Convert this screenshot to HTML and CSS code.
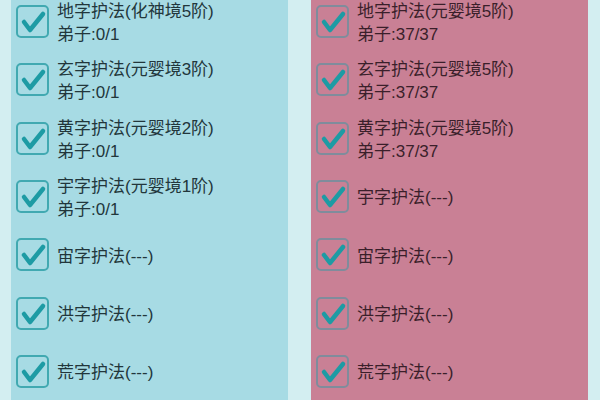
FILE: index.html
```html
<html lang="zh-CN">
<head>
    <meta charset="utf-8">
    <title>护法</title>
    <link rel="stylesheet" href="styles.css">
</head>
<body>
<div class="columns">
    <div class="panel panel-blue">
        <div class="row">
            <span class="box"><svg viewBox="0 0 33 33"><path d="M8 17 L14 25 L27 9"/></svg></span>
            <div class="label"><div>地字护法(化神境5阶)</div><div>弟子:0/1</div></div>
        </div>
        <div class="row">
            <span class="box"><svg viewBox="0 0 33 33"><path d="M8 17 L14 25 L27 9"/></svg></span>
            <div class="label"><div>玄字护法(元婴境3阶)</div><div>弟子:0/1</div></div>
        </div>
        <div class="row">
            <span class="box"><svg viewBox="0 0 33 33"><path d="M8 17 L14 25 L27 9"/></svg></span>
            <div class="label"><div>黄字护法(元婴境2阶)</div><div>弟子:0/1</div></div>
        </div>
        <div class="row">
            <span class="box"><svg viewBox="0 0 33 33"><path d="M8 17 L14 25 L27 9"/></svg></span>
            <div class="label"><div>宇字护法(元婴境1阶)</div><div>弟子:0/1</div></div>
        </div>
        <div class="row">
            <span class="box"><svg viewBox="0 0 33 33"><path d="M8 17 L14 25 L27 9"/></svg></span>
            <div class="label"><div>宙字护法(---)</div></div>
        </div>
        <div class="row">
            <span class="box"><svg viewBox="0 0 33 33"><path d="M8 17 L14 25 L27 9"/></svg></span>
            <div class="label"><div>洪字护法(---)</div></div>
        </div>
        <div class="row">
            <span class="box"><svg viewBox="0 0 33 33"><path d="M8 17 L14 25 L27 9"/></svg></span>
            <div class="label"><div>荒字护法(---)</div></div>
        </div>
    </div>
    <div class="panel panel-pink">
        <div class="row">
            <span class="box"><svg viewBox="0 0 33 33"><path d="M8 17 L14 25 L27 9"/></svg></span>
            <div class="label"><div>地字护法(元婴境5阶)</div><div>弟子:37/37</div></div>
        </div>
        <div class="row">
            <span class="box"><svg viewBox="0 0 33 33"><path d="M8 17 L14 25 L27 9"/></svg></span>
            <div class="label"><div>玄字护法(元婴境5阶)</div><div>弟子:37/37</div></div>
        </div>
        <div class="row">
            <span class="box"><svg viewBox="0 0 33 33"><path d="M8 17 L14 25 L27 9"/></svg></span>
            <div class="label"><div>黄字护法(元婴境5阶)</div><div>弟子:37/37</div></div>
        </div>
        <div class="row">
            <span class="box"><svg viewBox="0 0 33 33"><path d="M8 17 L14 25 L27 9"/></svg></span>
            <div class="label"><div>宇字护法(---)</div></div>
        </div>
        <div class="row">
            <span class="box"><svg viewBox="0 0 33 33"><path d="M8 17 L14 25 L27 9"/></svg></span>
            <div class="label"><div>宙字护法(---)</div></div>
        </div>
        <div class="row">
            <span class="box"><svg viewBox="0 0 33 33"><path d="M8 17 L14 25 L27 9"/></svg></span>
            <div class="label"><div>洪字护法(---)</div></div>
        </div>
        <div class="row">
            <span class="box"><svg viewBox="0 0 33 33"><path d="M8 17 L14 25 L27 9"/></svg></span>
            <div class="label"><div>荒字护法(---)</div></div>
        </div>
    </div>
</div>
</body>
</html>
```
FILE: styles.css
```css
body {
    margin: 0;
    background-color: #d3eef1;
    font-family: "Liberation Sans", "Noto Sans CJK SC", sans-serif;
    font-size: 17px;
    overflow: hidden;
}

.columns {
    display: flex;
    gap: 23px;
    padding: 0 12px 0 11px;
    align-items: flex-start;
}

.panel {
    flex: 1;
    margin-top: -7.7px;
    padding: 0 0 12px 5px;
}

.panel-blue {
    background-color: #a7dbe4;
    color: #22363b;
}

.panel-pink {
    background-color: #c98095;
    color: #3a1f2a;
}

.row {
    display: flex;
    align-items: center;
    gap: 8px;
    height: 58.33px;
}

/* checked tick box */
.box {
    width: 29px;
    height: 29px;
    border: 2px solid #41a9b1;
    border-radius: 5px;
    flex-shrink: 0;
}

.panel-pink .box {
    border-color: #7f8c9c;
}

.box svg {
    display: block;
    margin: -2px;
    width: 33px;
    height: 33px;
}

.box path {
    fill: none;
    stroke: #1d9ba4;
    stroke-width: 4.5;
    stroke-linecap: round;
    stroke-linejoin: round;
}

.label {
    line-height: 23px;
    padding-top: 3px;
}
```
